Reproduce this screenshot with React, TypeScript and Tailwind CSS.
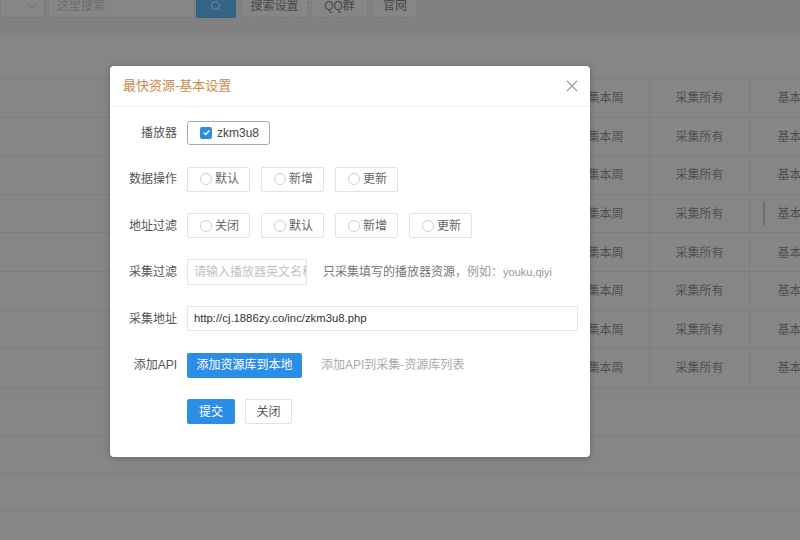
import { Search, ChevronDown } from "lucide-react"

const font = "font-['Liberation_Sans','Noto_Sans_CJK_SC',sans-serif]"

function Radio({ label }: { label: string }) {
  return (
    <div className="flex h-[25px] w-[63px] items-center gap-[3px] rounded-[2px] border border-[#e2e2e2] pl-[12px] text-[12px] text-[#666]">
      <span className="h-3 w-3 rounded-full border border-[#cfcfcf]" />
      {label}
    </div>
  )
}

function Row({ label, children }: { label: string; children: React.ReactNode }) {
  return (
    <div className="flex h-[25px] items-center">
      <div className="w-[67px] text-right text-[12px] text-[#555]">{label}</div>
      <div className="ml-[10px] flex items-center">{children}</div>
    </div>
  )
}

export default function App() {
  const rows = Array.from({ length: 8 })
  const emptyRows = Array.from({ length: 4 })

  return (
    <div className={`relative h-[540px] w-[800px] overflow-hidden bg-white ${font}`}>
      {/* toolbar */}
      <div className="flex h-[18px] items-end overflow-hidden bg-[#f2f2f2]">
        <div className="flex h-6 w-[45px] items-center justify-end rounded-[2px] border border-[#e2e2e2] bg-white pr-[6px]">
          <ChevronDown className="h-3 w-3 text-[#999]" />
        </div>
        <div className="ml-[3px] flex h-6 w-[147px] items-center border border-[#e2e2e2] bg-white pl-[8px] text-[12px] text-[#bbb]">
          这里搜索
        </div>
        <div className="ml-[1px] flex h-6 w-[40px] items-center justify-center rounded-[2px] bg-[#1e9fff]">
          <Search className="h-3 w-3 text-white" strokeWidth={2} />
        </div>
        <div className="ml-[5px] flex h-6 w-[67px] items-center justify-center rounded-[2px] border border-dashed border-[#d2d2d2] bg-white text-[12px] text-[#555]">
          搜索设置
        </div>
        <div className="ml-[3px] flex h-6 w-[57px] items-center justify-center rounded-[2px] border border-dashed border-[#d2d2d2] bg-white text-[12px] text-[#555]">
          QQ群
        </div>
        <div className="ml-[4px] flex h-6 w-[46px] items-center justify-center rounded-[2px] border border-dashed border-[#d2d2d2] bg-white text-[12px] text-[#555]">
          官网
        </div>
      </div>
      <div className="h-[17px] border-b border-[#e6e6e6] bg-[#f2f2f2]" />

      {/* table head */}
      <div className="h-[44px] border-b border-[#e6e6e6] bg-white" />

      {/* table body */}
      <div className="w-[850px]">
        {rows.map((_, i) => (
          <div key={i} className="grid h-[38.6px] grid-cols-[550px_100px_100px_100px] border-b border-[#e6e6e6] pt-[1px] text-[12px] text-[#6e6e6e]">
            <div className="border-r border-[#e6e6e6]" />
            <div className="flex items-center justify-center border-r border-[#e6e6e6]">采集本周</div>
            <div className="flex items-center justify-center border-r border-[#e6e6e6]">采集所有</div>
            <div className="relative flex items-center justify-center pl-[3px]">
              {i === 3 && <span className="absolute left-[13px] top-[5px] h-[24px] w-[2px] bg-[#b9c0cc]" />}
              基本设置
            </div>
          </div>
        ))}
      </div>
      <div className="h-[11px] border-b border-[#eeeeee]" />
      {emptyRows.map((_, i) => (
        <div key={i} className="h-[37.5px] border-b border-[#e6e6e6]" />
      ))}

      {/* shade */}
      <div className="absolute inset-0 bg-[#404040]/[0.63]" />

      {/* dialog */}
      <div className="absolute left-[110px] top-[66px] h-[391px] w-[480px] rounded-[4px] bg-white shadow-[0_1px_6px_rgba(0,0,0,0.25)]">
        <div className="flex h-[41px] items-center justify-between border-b border-[#eeeeee] pl-[13px] pr-[12px]">
          <span className="text-[13px] text-[#c98a4e]">最快资源-基本设置</span>
          <svg width="12" height="12" viewBox="0 0 12 12" className="text-[#999]">
            <path d="M1 1L11 11M11 1L1 11" stroke="currentColor" strokeWidth="1.1" />
          </svg>
        </div>

        <div className="flex flex-col gap-[21.5px] pt-[13px]">
          <Row label="播放器">
            <div className="flex h-[24px] w-[83px] items-center gap-[5px] rounded-[3px] border border-[#9eacbf] pl-[12px] text-[12px] text-[#444]">
              <span className="flex h-[12px] w-[12px] items-center justify-center rounded-[2px] bg-[#2b8de6]">
                <svg width="9" height="9" viewBox="0 0 10 10">
                  <path d="M2 5.2L4.2 7.3L8.2 2.8" fill="none" stroke="white" strokeWidth="1.6" />
                </svg>
              </span>
              zkm3u8
            </div>
          </Row>

          <Row label="数据操作">
            <div className="flex gap-[11px]">
              <Radio label="默认" />
              <Radio label="新增" />
              <Radio label="更新" />
            </div>
          </Row>

          <Row label="地址过滤">
            <div className="flex gap-[11px]">
              <Radio label="关闭" />
              <Radio label="默认" />
              <Radio label="新增" />
              <Radio label="更新" />
            </div>
          </Row>

          <Row label="采集过滤">
            <div className="flex h-[26px] w-[120px] items-center overflow-hidden whitespace-nowrap border border-[#e6e6e6] pl-[6px] text-[12px] text-[#c2c2c2]">
              请输入播放器英文名称
            </div>
            <span className="ml-[16px] text-[12px] text-[#777]">
              只采集填写的播放器资源<span className="text-[#999]">，例如：<span className="text-[11px]">youku,qiyi</span></span>
            </span>
          </Row>

          <Row label="采集地址">
            <div className="flex h-[25px] w-[391px] items-center border border-[#e6e6e6] pl-[6px] text-[11.3px] text-[#333]">
              http://cj.1886zy.co/inc/zkm3u8.php
            </div>
          </Row>

          <Row label="添加API">
            <div className="flex h-[25px] w-[115px] items-center justify-center rounded-[2px] bg-[#2b8de6] text-[12px] text-white">
              添加资源库到本地
            </div>
            <span className="ml-[19px] text-[12px] text-[#aaa]">添加API到采集-资源库列表</span>
          </Row>

          <Row label="">
            <div className="flex gap-[10px]">
              <div className="flex h-[25px] w-[48px] items-center justify-center rounded-[2px] bg-[#2b8de6] text-[12px] text-white">
                提交
              </div>
              <div className="flex h-[25px] w-[47px] items-center justify-center rounded-[2px] border border-[#e2e2e2] text-[12px] text-[#555]">
                关闭
              </div>
            </div>
          </Row>
        </div>
      </div>
    </div>
  )
}
